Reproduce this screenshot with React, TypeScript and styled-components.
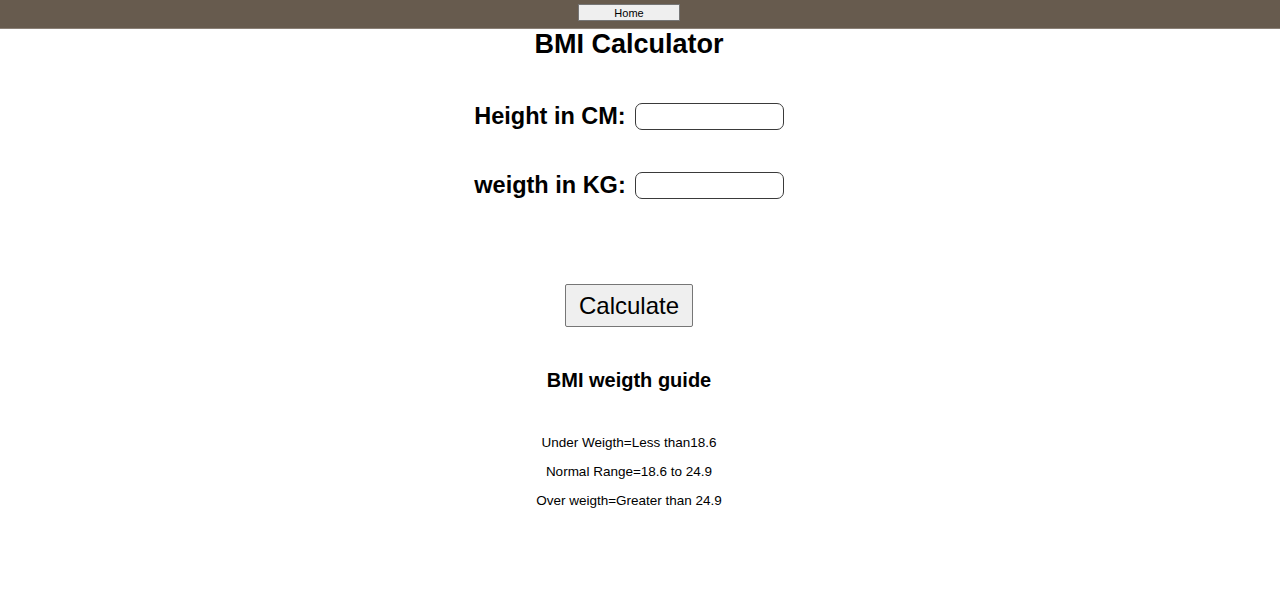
import React from "react";
import styled, { createGlobalStyle } from "styled-components";

const Global = createGlobalStyle`
  html, body { margin: 0; padding: 0; background: #fff; }
  body { font-family: "Liberation Sans", Arial, sans-serif; color: #000; }
`;

const NavBar = styled.nav`
  height: 29px;
  background: #675b4e;
  display: flex;
  justify-content: center;
  align-items: flex-start;
  padding: 4px 22px 0 0;
  box-sizing: border-box;
  border-bottom: 1px solid #8a8076;
`;

const NavButton = styled.button`
  width: 102px;
  height: 17px;
  padding: 0;
  font-family: "Liberation Sans", Arial, sans-serif;
  font-size: 11px;
  color: #000;
  background: #efefef;
  border: 1px solid #767676;
  border-radius: 0;
`;

const Main = styled.main`
  display: flex;
  flex-direction: column;
  align-items: center;
  padding-right: 22px;
`;

const Title = styled.h1`
  margin: 0;
  font-size: 27px;
  line-height: 30px;
  font-weight: bold;
`;

const Form = styled.div`
  display: flex;
  flex-direction: column;
  align-items: center;
  gap: 42px;
  margin-top: 44px;
`;

const Row = styled.label`
  display: flex;
  align-items: center;
  gap: 9px;
  font-size: 23.5px;
  font-weight: bold;
  line-height: 27px;
`;

const Field = styled.input`
  width: 149px;
  height: 27px;
  box-sizing: border-box;
  border: 1px solid #3a3a3a;
  border-radius: 7px;
  padding: 0 6px;
  font-size: 14px;
`;

const CalcButton = styled.button`
  margin-top: 85px;
  width: 128px;
  height: 43px;
  font-family: "Liberation Sans", Arial, sans-serif;
  font-size: 24px;
  color: #000;
  background: #efefef;
  border: 1px solid #767676;
  border-radius: 2px;
  padding: 0;
`;

const GuideTitle = styled.h3`
  margin: 41px 0 0;
  font-size: 20px;
  line-height: 24px;
  font-weight: bold;
`;

const GuideList = styled.div`
  margin-top: 43px;
  display: flex;
  flex-direction: column;
  align-items: center;
  gap: 13px;
`;

const GuideItem = styled.p`
  margin: 0;
  font-size: 13.5px;
  line-height: 16px;
`;

export default function App() {
  return (
    <>
      <Global />
      <NavBar>
        <NavButton>Home</NavButton>
      </NavBar>
      <Main>
        <Title>BMI Calculator</Title>
        <Form>
          <Row>
            Height in CM: <Field type="text" />
          </Row>
          <Row>
            weigth in KG: <Field type="text" />
          </Row>
        </Form>
        <CalcButton>Calculate</CalcButton>
        <GuideTitle>BMI weigth guide</GuideTitle>
        <GuideList>
          <GuideItem>Under Weigth=Less than18.6</GuideItem>
          <GuideItem>Normal Range=18.6 to 24.9</GuideItem>
          <GuideItem>Over weigth=Greater than 24.9</GuideItem>
        </GuideList>
      </Main>
    </>
  );
}
